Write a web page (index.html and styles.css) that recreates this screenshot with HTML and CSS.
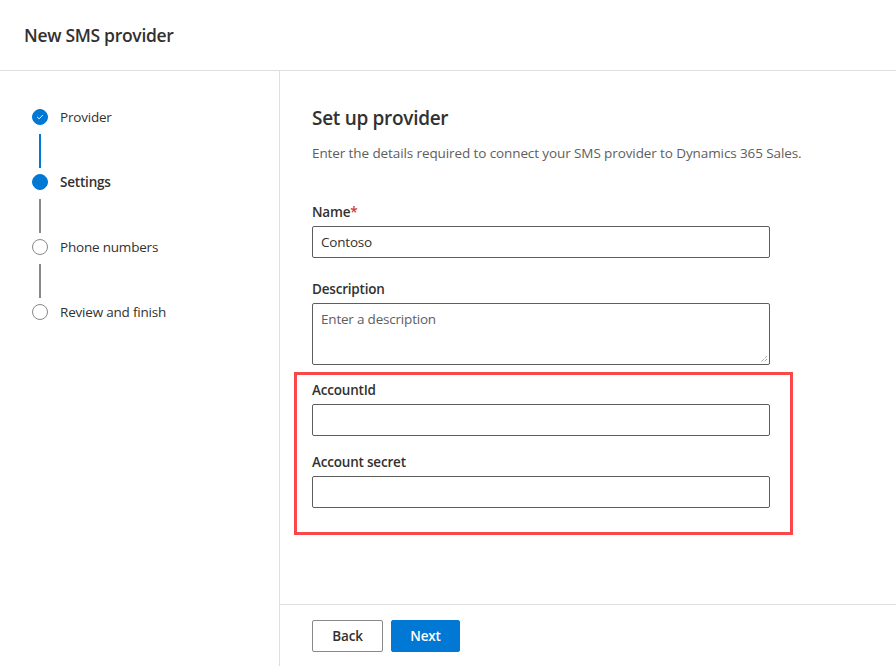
FILE: index.html
```html
<!DOCTYPE html>
<html lang="en">
<head>
<meta charset="utf-8">
<title>New SMS provider</title>
<link rel="stylesheet" href="styles.css">
</head>
<body>
<div class="app">
  <header class="header">
    <h1 class="header-title">New SMS provider</h1>
  </header>
  <div class="body">
    <nav class="steps">
      <div class="step">
        <span class="dot dot-done">
          <svg width="16" height="16" viewBox="0 0 16 16"><path d="M5 8.2 L7 10.1 L11 6" fill="none" stroke="#fff" stroke-width="1" stroke-linecap="round" stroke-linejoin="round"/></svg>
        </span>
        <span class="step-label">Provider</span>
      </div>
      <div class="connector connector-done"></div>
      <div class="step">
        <span class="dot dot-current"></span>
        <span class="step-label step-label-current">Settings</span>
      </div>
      <div class="connector"></div>
      <div class="step">
        <span class="dot"></span>
        <span class="step-label">Phone numbers</span>
      </div>
      <div class="connector"></div>
      <div class="step">
        <span class="dot"></span>
        <span class="step-label">Review and finish</span>
      </div>
    </nav>
    <main class="main">
      <div class="form">
        <h2 class="form-title">Set up provider</h2>
        <p class="form-desc">Enter the details required to connect your SMS provider to Dynamics 365 Sales.</p>
        <div class="field field-first">
          <label class="label">Name<span class="req">*</span></label>
          <div class="input"><span class="value">Contoso</span></div>
        </div>
        <div class="field field-desc">
          <label class="label">Description</label>
          <div class="textarea">
            <span class="placeholder">Enter a description</span>
            <svg class="grip" width="8" height="8" viewBox="0 0 8 8"><path d="M7 1 L1 7 M7 4 L4 7" stroke="#777" stroke-width="1" stroke-dasharray="1 1"/></svg>
          </div>
        </div>
        <div class="highlight">
          <div class="field">
            <label class="label">AccountId</label>
            <div class="input"></div>
          </div>
          <div class="field field-secret">
            <label class="label">Account secret</label>
            <div class="input"></div>
          </div>
        </div>
      </div>
      <footer class="footer">
        <button class="btn btn-secondary">Back</button>
        <button class="btn btn-primary">Next</button>
      </footer>
    </main>
  </div>
</div>
</body>
</html>
```
FILE: styles.css
```css
* { box-sizing: border-box; }
html, body { margin: 0; padding: 0; background: #fff; }
body {
  font-family: "Segoe UI", "Open Sans", "Noto Sans", sans-serif;
  color: #323130;
  font-size: 14px;
}
.app { width: 896px; height: 666px; display: flex; flex-direction: column; overflow: hidden; }
.header {
  height: 71px;
  border-bottom: 1px solid #e1dfdd;
  padding: 22px 0 0 24px;
}
.header-title { margin: 0; font-size: 17.5px; font-weight: 600; line-height: 26px; color: #323130; letter-spacing: -0.3px; }
.body { flex: 1; display: flex; }
.steps {
  width: 280px;
  border-right: 1px solid #e1dfdd;
  padding: 38px 0 0 32px;
}
.step { display: flex; align-items: center; height: 16px; }
.dot {
  width: 16px; height: 16px; border-radius: 50%;
  border: 1px solid #8a8886; background: #fff;
  display: flex; align-items: center; justify-content: center;
  flex: none;
}
.dot-done, .dot-current { background: #0078d4; border-color: #0078d4; }
.dot svg { display: block; }
.step-label { margin-left: 12px; font-size: 13.5px; line-height: 20px; color: #323130; letter-spacing: -0.2px; }
.step-label-current { font-weight: 600; }
.connector { width: 2px; height: 34px; margin: 9px 0 6px 7px; background: #8a8886; }
.connector-done { background: #0078d4; }
.main { flex: 1; display: flex; flex-direction: column; }
.form { flex: 1; padding: 33px 0 0 32px; }
.form-title { margin: 0; font-size: 19px; font-weight: 600; line-height: 28px; letter-spacing: -0.3px; }
.form-desc { margin: 11px 0 0; font-size: 13.5px; line-height: 20px; color: #605e5c; letter-spacing: -0.1px; }
.field { display: flex; flex-direction: column; width: 458px; }
.field-first { margin-top: 39px; }
.field-desc { margin-top: 21px; }
.field-secret { margin-top: 16px; }
.label { font-size: 13.5px; font-weight: 600; line-height: 20px; margin-bottom: 4px; letter-spacing: -0.2px; }
.req { color: #d13438; }
.input {
  height: 32px; border: 1px solid #605e5c; border-radius: 2px;
  padding: 0 8px; display: flex; align-items: center;
}
.value { font-size: 13.5px; color: #323130; letter-spacing: -0.2px; }
.textarea {
  position: relative;
  height: 62px; border: 1px solid #605e5c; border-radius: 2px;
  padding: 5px 8px;
}
.placeholder { font-size: 13.5px; line-height: 20px; color: #605e5c; letter-spacing: -0.2px; }
.grip { position: absolute; right: 1px; bottom: 1px; }
.highlight {
  margin: 7px 0 0 -18px;
  width: 499px;
  border: 3px solid #f9474a;
  padding: 5px 20px 24px 15px;
}
.footer {
  height: 62px;
  border-top: 1px solid #e1dfdd;
  padding: 15px 0 0 32px;
  display: flex; gap: 8px; align-items: flex-start;
}
.btn {
  height: 32px; border-radius: 2px; font-family: inherit;
  font-size: 13.5px; font-weight: 600; padding: 0; letter-spacing: -0.2px;
}
.btn-secondary { width: 71px; background: #fff; border: 1px solid #8a8886; color: #323130; }
.btn-primary { width: 69px; background: #0078d4; border: 1px solid #0078d4; color: #fff; }
```
